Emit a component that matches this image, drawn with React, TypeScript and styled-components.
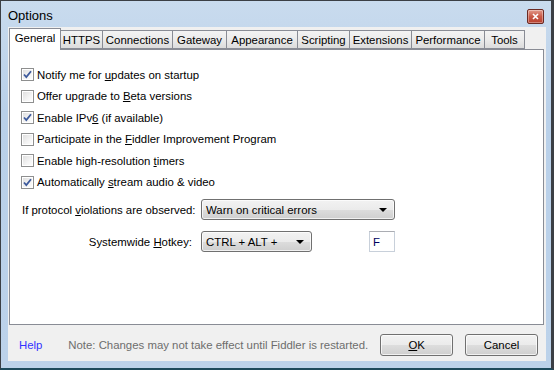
import React from "react";
import styled, { createGlobalStyle } from "styled-components";

const GlobalStyle = createGlobalStyle`
  html, body {
    margin: 0;
    padding: 0;
    background: #ffffff;
  }
  body {
    font-family: "Liberation Sans", Arial, sans-serif;
    font-size: 11.4px;
    color: #000;
  }
`;

const Window = styled.div`
  width: 554px;
  height: 370px;
  box-sizing: border-box;
  border: 1px solid #3b3f45;
  border-right-width: 3px;
  border-bottom: 2px solid #1d4a5c;
  background: linear-gradient(180deg, #c9dbee 0%, #b9d0e9 30%, #bcd2ea 100%);
  display: flex;
  flex-direction: column;
  padding: 0 5px 7px 7px;
`;

const TitleBar = styled.div`
  height: 26px;
  display: flex;
  align-items: center;
  justify-content: space-between;
`;

const Title = styled.div`
  font-size: 13px;
  color: #000;
  padding-top: 3px;
`;

const CloseButton = styled.div`
  width: 15px;
  height: 13px;
  margin-right: 2px;
  margin-top: 4px;
  border: 1px solid #6b2a23;
  border-radius: 2px;
  background: linear-gradient(180deg, #e39a8b 0%, #c95a47 50%, #b8402f 100%);
  display: flex;
  align-items: center;
  justify-content: center;
  box-shadow: inset 0 0 0 1px rgba(255, 255, 255, 0.35);
`;

const Client = styled.div`
  flex: 1;
  background: #f0f0f0;
  display: flex;
  flex-direction: column;
  padding: 1px 2px 0 1px;
`;

const TabStrip = styled.div`
  display: flex;
  align-items: flex-end;
  height: 21px;
  position: relative;
  z-index: 1;
`;

const Tab = styled.div<{ $active?: boolean; $w: number }>`
  box-sizing: border-box;
  width: ${({ $w }) => $w}px;
  height: ${({ $active }) => ($active ? "22px" : "19px")};
  margin-bottom: ${({ $active }) => ($active ? "-1px" : "0")};
  padding-top: ${({ $active }) => ($active ? "3px" : "1px")};
  border: 1px solid #898c95;
  border-bottom: ${({ $active }) => ($active ? "none" : "1px solid #898c95")};
  border-left-width: ${({ $active }) => ($active ? "1px" : "0")};
  background: ${({ $active }) =>
    $active ? "#ffffff" : "linear-gradient(180deg, #f3f3f3 0%, #ebebeb 50%, #dcdcdc 100%)"};
  display: flex;
  justify-content: center;
  align-items: ${({ $active }) => ($active ? "flex-start" : "center")};
  white-space: nowrap;
  &:first-child {
    border-left-width: 1px;
  }
`;

const Panel = styled.div`
  flex: 1;
  background: #ffffff;
  border: 1px solid #898c95;
  display: flex;
  flex-direction: column;
  padding: 14px 12px 0 11px;
`;

const CheckList = styled.div`
  display: flex;
  flex-direction: column;
`;

const CheckRow = styled.label`
  height: 21.5px;
  display: flex;
  align-items: center;
  gap: 3px;
  white-space: nowrap;
`;

const Box = styled.span`
  width: 11px;
  height: 11px;
  border: 1px solid #8e8f8f;
  background: linear-gradient(135deg, #dcdcdc 0%, #f4f4f4 60%, #ffffff 100%);
  box-shadow: inset 0 0 0 1px #ffffff;
  display: inline-flex;
  align-items: center;
  justify-content: center;
  flex: none;
`;

const Mn = styled.span`
  text-decoration: underline;
`;

const Fields = styled.div`
  margin-top: 6px;
  display: grid;
  grid-template-columns: 180px auto;
  row-gap: 11px;
  align-items: center;
`;

const FieldLabel = styled.div<{ $right?: boolean }>`
  white-space: nowrap;
  text-align: ${({ $right }) => ($right ? "right" : "left")};
  padding-left: 1px;
  padding-right: ${({ $right }) => ($right ? "9px" : "0")};
`;

const FieldControls = styled.div`
  display: flex;
  align-items: center;
`;

const Select = styled.div<{ $w: number }>`
  box-sizing: border-box;
  width: ${({ $w }) => $w}px;
  height: 21px;
  border: 1px solid #707070;
  border-radius: 3px;
  background: linear-gradient(180deg, #f2f2f2 0%, #ebebeb 50%, #dddddd 51%, #cfcfcf 100%);
  box-shadow: inset 0 0 0 1px rgba(255, 255, 255, 0.7);
  display: flex;
  align-items: center;
  justify-content: space-between;
  padding: 0 7px 0 4px;
  white-space: nowrap;
`;

const Arrow = styled.span`
  width: 0;
  height: 0;
  border-left: 4px solid transparent;
  border-right: 4px solid transparent;
  border-top: 4px solid #000;
`;

const TextBox = styled.div`
  box-sizing: border-box;
  width: 26px;
  height: 21px;
  margin-left: 57px;
  border: 1px solid #c8d0da;
  border-top-color: #abadb3;
  background: #fff;
  display: flex;
  align-items: center;
  padding-left: 3px;
  color: #000060;
`;

const Footer = styled.div`
  height: 36px;
  box-sizing: border-box;
  display: flex;
  align-items: center;
  padding: 3px 6px 0 10px;
`;

const HelpLink = styled.span`
  color: #3333ff;
  width: 50px;
`;

const Note = styled.span`
  color: #6d6d6d;
  flex: 1;
  white-space: nowrap;
`;

const Button = styled.div`
  box-sizing: border-box;
  width: 74px;
  height: 22px;
  border: 1px solid #707070;
  border-radius: 3px;
  background: linear-gradient(180deg, #f2f2f2 0%, #ebebeb 50%, #dddddd 51%, #cfcfcf 100%);
  box-shadow: inset 0 0 0 1px rgba(255, 255, 255, 0.7);
  display: flex;
  align-items: center;
  justify-content: center;
  margin-left: 12px;
`;

const Check = () => (
  <svg width="9" height="9" viewBox="0 0 9 9">
    <path d="M1 4.5 L3.3 7 L8 1.2" fill="none" stroke="#3d5a9c" strokeWidth="1.8" />
  </svg>
);

const CheckItem = ({ checked, children }: { checked?: boolean; children: React.ReactNode }) => (
  <CheckRow>
    <Box>{checked && <Check />}</Box>
    <span>{children}</span>
  </CheckRow>
);

const tabs: [string, number][] = [
  ["General", 52],
  ["HTTPS", 42],
  ["Connections", 70],
  ["Gateway", 54],
  ["Appearance", 71],
  ["Scripting", 52],
  ["Extensions", 62],
  ["Performance", 73],
  ["Tools", 40],
];

export default function App() {
  return (
    <>
      <GlobalStyle />
      <Window>
        <TitleBar>
          <Title>Options</Title>
          <CloseButton>
            <svg width="7" height="7" viewBox="0 0 7 7">
              <path d="M1 1 L6 6 M6 1 L1 6" stroke="#ffffff" strokeWidth="1.6" />
            </svg>
          </CloseButton>
        </TitleBar>
        <Client>
          <TabStrip>
            {tabs.map(([t, w], i) => (
              <Tab key={t} $w={w} $active={i === 0}>
                {t}
              </Tab>
            ))}
          </TabStrip>
          <Panel>
            <CheckList>
              <CheckItem checked>
                Notify me for <Mn>u</Mn>pdates on startup
              </CheckItem>
              <CheckItem>
                Offer upgrade to <Mn>B</Mn>eta versions
              </CheckItem>
              <CheckItem checked>
                Enable IPv<Mn>6</Mn> (if available)
              </CheckItem>
              <CheckItem>
                Participate in the <Mn>F</Mn>iddler Improvement Program
              </CheckItem>
              <CheckItem>
                Enable high-resolution <Mn>t</Mn>imers
              </CheckItem>
              <CheckItem checked>
                Automatically <Mn>s</Mn>tream audio &amp; video
              </CheckItem>
            </CheckList>
            <Fields>
              <FieldLabel>
                If protocol <Mn>v</Mn>iolations are observed:
              </FieldLabel>
              <FieldControls>
                <Select $w={194}>
                  <span>Warn on critical errors</span>
                  <Arrow />
                </Select>
              </FieldControls>
              <FieldLabel $right>
                Systemwide <Mn>H</Mn>otkey:
              </FieldLabel>
              <FieldControls>
                <Select $w={111}>
                  <span>CTRL + ALT +</span>
                  <Arrow />
                </Select>
                <TextBox>F</TextBox>
              </FieldControls>
            </Fields>
          </Panel>
          <Footer>
            <HelpLink>Help</HelpLink>
            <Note>Note: Changes may not take effect until Fiddler is restarted.</Note>
            <Button>
              <Mn>O</Mn>K
            </Button>
            <Button>Cancel</Button>
          </Footer>
        </Client>
      </Window>
    </>
  );
}
